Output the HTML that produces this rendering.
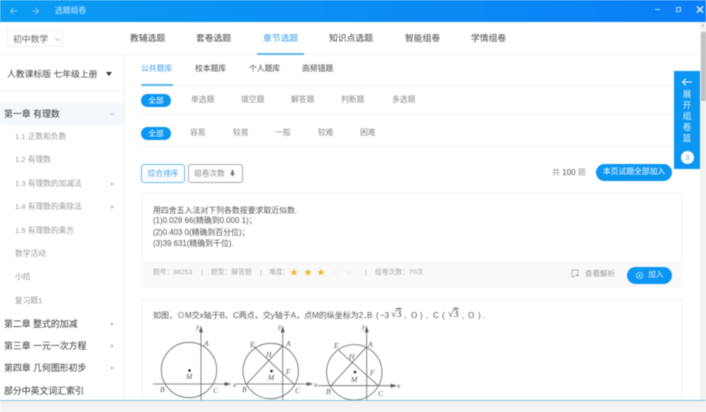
<!DOCTYPE html>
<html lang="zh">
<head>
<meta charset="utf-8">
<style>
html,body{margin:0;padding:0;width:706px;height:412px;overflow:hidden;background:#fff}
#r{position:relative;width:706px;height:412px;overflow:hidden;font-family:"Liberation Sans","Noto Sans CJK SC",sans-serif;filter:blur(.4px)}
#r div{position:absolute}
.t{position:absolute;white-space:nowrap;line-height:12px;height:12px}
.tab{font-size:8.8px;color:#444;top:32px}
.lib{font-size:7.8px;color:#444;top:63px}
.f{font-size:7.8px;color:#888}
.sub{font-size:7.7px;color:#999;left:15px}
.ch{font-size:8.9px;color:#333;left:4px}
.pill{background:#0b96f2;border-radius:7px;color:#fff;font-size:7.6px;text-align:center;line-height:13px;left:141px;width:30px;height:13px}
.ln{background:#f3f3f3;height:1px;left:141px;width:542px}
.q{font-size:7.9px;color:#555;left:153px}
.p{font-size:8px;color:#555;top:310px}
.m{font-size:6.8px;color:#aaa;top:267px}
.star{font-size:8px;top:267px;line-height:12px}
.arr{position:absolute;width:0;height:0;border-top:2px solid transparent;border-bottom:2px solid transparent;border-left:3px solid #bbb}
</style>
</head>
<body>
<div id="r">
<!-- title bar -->
<div style="left:0;top:0;width:706px;height:22px;background:linear-gradient(90deg,#0a9df2,#0a7ef6)"></div>
<svg style="position:absolute;left:0;top:0" width="60" height="22" fill="none" stroke="#7cc6f5" stroke-width="1.1"><path d="M10.5 11H17M13.5 8L10.5 11L13.5 14"/><path d="M32 11H38.5M35.5 8L38.5 11L35.5 14"/></svg>
<span class="t" style="left:55px;top:5px;font-size:7.8px;color:#cfeafd">选题组卷</span>
<div style="left:655px;top:8.5px;width:5px;height:1.5px;background:#a9d6fb"></div>
<div style="left:676px;top:7px;width:3px;height:3px;border:1px solid #a9d6fb"></div>
<svg style="position:absolute;left:696px;top:5px" width="9" height="9" stroke="#d7ecfd" stroke-width="1.5"><path d="M1 1.5L7 7.5M7 1.5L1 7.5"/></svg>

<!-- top nav -->
<div style="left:0;top:54px;width:700px;height:1px;background:#f2f2f2"></div>
<div style="left:7px;top:30px;width:56px;height:17px;border:1px solid #efefef;box-sizing:border-box"></div>
<span class="t" style="left:13px;top:33px;font-size:8.8px;color:#666">初中数学</span>
<svg style="position:absolute;left:54px;top:37px" width="7" height="5" fill="none" stroke="#aaa" stroke-width=".7"><path d="M1 1L3.5 3.5L6 1"/></svg>
<span class="t tab" style="left:130px">教辅选题</span>
<span class="t tab" style="left:196px">套卷选题</span>
<span class="t tab" style="left:263px;color:#3c9ce6">章节选题</span>
<span class="t tab" style="left:329px">知识点选题</span>
<span class="t tab" style="left:405px">智能组卷</span>
<span class="t tab" style="left:471px">学情组卷</span>
<div style="left:257px;top:53px;width:47px;height:2px;background:#62b6e6"></div>

<!-- sidebar -->
<div style="left:124px;top:55px;width:1px;height:345px;background:#efefef"></div>
<span class="t" style="left:7px;top:68px;font-size:8.8px;color:#444">人教课标版 七年级上册</span>
<div style="left:106px;top:72px;width:0;height:0;border-left:3px solid transparent;border-right:3px solid transparent;border-top:4px solid #333"></div>
<div style="left:0;top:91px;width:124px;height:1px;background:#efefef"></div>
<div style="left:0;top:103px;width:124px;height:22px;background:#f3f8fd"></div>
<span class="t ch" style="top:108px">第一章 有理数</span>
<svg style="position:absolute;left:109px;top:112px" width="6" height="4" fill="none" stroke="#bbb" stroke-width=".8"><path d="M1 1L3 3L5 1"/></svg>
<span class="t sub" style="top:131px">1.1 正数和负数</span>
<span class="t sub" style="top:154px">1.2 有理数</span>
<span class="t sub" style="top:178px">1.3 有理数的加减法</span>
<span class="arr" style="left:111px;top:182px"></span>
<span class="t sub" style="top:201px">1.4 有理数的乘除法</span>
<span class="arr" style="left:111px;top:205px"></span>
<span class="t sub" style="top:225px">1.5 有理数的乘方</span>
<span class="t sub" style="top:248px">数学活动</span>
<span class="t sub" style="top:271px">小结</span>
<span class="t sub" style="top:295px">复习题1</span>
<span class="t ch" style="top:318px">第二章 整式的加减</span>
<span class="arr" style="left:111px;top:322px"></span>
<span class="t ch" style="top:340px">第三章 一元一次方程</span>
<span class="arr" style="left:111px;top:344px"></span>
<span class="t ch" style="top:362px">第四章 几何图形初步</span>
<span class="arr" style="left:111px;top:366px"></span>
<span class="t ch" style="top:385px">部分中英文词汇索引</span>

<!-- library tabs -->
<span class="t lib" style="left:141px;color:#3c9ce6">公共题库</span>
<span class="t lib" style="left:195px">校本题库</span>
<span class="t lib" style="left:249px">个人题库</span>
<span class="t lib" style="left:302px">高频错题</span>
<div class="ln" style="top:85px"></div>
<div style="left:141px;top:84px;width:32px;height:1.5px;background:#5cb3ee"></div>

<!-- filters -->
<div class="pill" style="top:94px">全部</div>
<span class="t f" style="left:191px;top:94px">单选题</span>
<span class="t f" style="left:241px;top:94px">填空题</span>
<span class="t f" style="left:291px;top:94px">解答题</span>
<span class="t f" style="left:341px;top:94px">判断题</span>
<span class="t f" style="left:392px;top:94px">多选题</span>
<div class="ln" style="top:114px"></div>
<div class="pill" style="top:127px">全部</div>
<span class="t f" style="left:190px;top:127px">容易</span>
<span class="t f" style="left:233px;top:127px">较易</span>
<span class="t f" style="left:275px;top:127px">一般</span>
<span class="t f" style="left:318px;top:127px">较难</span>
<span class="t f" style="left:360px;top:127px">困难</span>
<div class="ln" style="top:146px"></div>

<!-- sort -->
<div style="left:141px;top:164px;width:44px;height:19px;border:1px solid #6bb8ec;border-radius:3px;box-sizing:border-box;color:#3c9ce6;font-size:7.7px;text-align:center;line-height:17px">综合排序</div>
<div style="left:188px;top:164px;width:55px;height:19px;border:1px solid #aaa;border-radius:3px;box-sizing:border-box"></div>
<span class="t" style="left:194px;top:168px;font-size:7.7px;color:#888">组卷次数</span>
<svg style="position:absolute;left:229px;top:169px" width="7" height="9" fill="#777"><path d="M2.5 1H4.500V4H6L3.500 7.500L1 4H2.500Z"/></svg>
<span class="t" style="left:552px;top:167px;font-size:8px;color:#999">共 <span style="color:#555">100</span> 题</span>
<div style="left:596px;top:164px;width:76px;height:16.5px;border-radius:9px;background:#0b96f2;color:#fff;font-size:7.8px;text-align:center;line-height:16.5px">本页试题全部加入</div>

<!-- card 1 -->
<div style="left:141px;top:193px;width:542px;height:95px;border:1px solid #f4f4f4;box-sizing:border-box"></div>
<div style="left:141px;top:261px;width:542px;height:27px;background:#f9f9f9"></div>
<span class="t q" style="top:205px">用四舍五入法对下列各数按要求取近似数.</span>
<span class="t q" style="top:215px">(1)0.028 66(精确到0.000 1)；</span>
<span class="t q" style="top:227px">(2)0.403 0(精确到百分位)；</span>
<span class="t q" style="top:238px">(3)39 631(精确到千位).</span>
<span class="t m" style="left:153px">题号：88253</span>
<span class="t m" style="left:201px">|</span>
<span class="t m" style="left:211px">题型：解答题</span>
<span class="t m" style="left:260px">|</span>
<span class="t m" style="left:269px">难度：</span>
<span class="t star" style="left:290px;color:#f2b01e">★</span>
<span class="t star" style="left:304px;color:#f2b01e">★</span>
<span class="t star" style="left:317px;color:#f2b01e">★</span>
<span class="t star" style="left:331px;color:#f3f3f3">★</span>
<span class="t star" style="left:345px;color:#f3f3f3">★</span>
<span class="t m" style="left:365px">|</span>
<span class="t m" style="left:375px">组卷次数：70次</span>
<svg style="position:absolute;left:571px;top:269px" width="9" height="9" fill="none" stroke="#999" stroke-width=".7"><path d="M1 1H7V4M1 1V7.5H4M5 5L7.5 7.5M4.5 6A1.3 1.3 0 1 0 7 4.8"/></svg>
<span class="t" style="left:585px;top:268px;font-size:7.5px;color:#999">查看解析</span>
<div style="left:627px;top:267px;width:45px;height:17px;border-radius:9px;background:#0b96f2"></div>
<svg style="position:absolute;left:635px;top:271px" width="9" height="9" fill="none" stroke="#d5eefd" stroke-width=".7"><circle cx="4.5" cy="4.5" r="3.2"/><path d="M3 4.5H6M4.5 3V6"/></svg>
<span class="t" style="left:648px;top:269px;font-size:7.8px;color:#e6f5fe">加入</span>

<!-- card 2 -->
<div style="left:141px;top:299px;width:542px;height:113px;border:1px solid #f4f4f4;box-sizing:border-box"></div>
<span class="t p" style="left:153px">如图，⊙M交x轴于B、C两点，交y轴于A，点M的纵坐标为2．</span>
<span class="t p" style="left:367px">B</span>
<span class="t p" style="left:376px">(</span>
<span class="t p" style="left:380px">−3</span>
<span class="t" style="left:391px;top:309px;font-size:10px;color:#444;font-family:'Liberation Serif',serif">√<span style="text-decoration:overline">3</span></span>
<span class="t p" style="left:404px">,</span>
<span class="t p" style="left:411px">O</span>
<span class="t p" style="left:420px">)</span>
<span class="t p" style="left:426px">,</span>
<span class="t p" style="left:433px">C</span>
<span class="t p" style="left:442px">(</span>
<span class="t" style="left:448px;top:309px;font-size:10px;color:#444;font-family:'Liberation Serif',serif">√<span style="text-decoration:overline">3</span></span>
<span class="t p" style="left:462px">,</span>
<span class="t p" style="left:468px">O</span>
<span class="t p" style="left:478px">)</span>
<span class="t p" style="left:483px">.</span>
<svg style="position:absolute;left:130px;top:320px" width="290" height="92" fill="none" stroke="#666" stroke-width=".8" font-family="Liberation Serif,serif" font-style="italic" font-size="7.5">
 <!-- fig 1 -->
 <circle cx="59" cy="50" r="27.7"/>
 <path d="M71 9V92M23 64H99"/>
 <path d="M71 7L69.500 12H72.500ZM100 64L95 62.500V65.500Z" fill="#555"/>
 <circle cx="59.5" cy="50.500" r="1.3" fill="#222" stroke="none"/>
 <g fill="#555" stroke="none">
  <text x="66" y="9">y</text><text x="103" y="67">x</text><text x="74" y="26">A</text><text x="30" y="72">B</text><text x="83" y="73">C</text><text x="56" y="59">M</text>
 </g>
 <!-- fig 2 -->
 <circle cx="140.7" cy="51" r="27.7"/>
 <path d="M152.7 9V92M105.700 64H181M116.700 64L152.700 25.700M124 26.700L165 65"/>
 <path d="M152.7 7L151.2 12H154.2ZM182 64L177 62.500V65.500Z" fill="#555"/>
 <circle cx="141.5" cy="51" r="1.3" fill="#222" stroke="none"/>
 <g fill="#555" stroke="none">
  <text x="148" y="9">y</text><text x="184" y="67">x</text><text x="156" y="26">A</text><text x="112" y="72">B</text><text x="165" y="73">C</text><text x="138" y="60">M</text><text x="120" y="27">E</text><text x="136" y="37">H</text><text x="156" y="54">F</text>
 </g>
 <!-- fig 3 -->
 <circle cx="224.3" cy="52.3" r="27.7"/>
 <path d="M236.7 9V92M188 65.700H265M201 65.700L236.700 26.700M208.300 30L248.300 65.700"/>
 <path d="M236.7 7L235.2 12H238.2ZM266 65.700L261 64.200V67.200Z" fill="#555"/>
 <circle cx="225" cy="52" r="1.3" fill="#222" stroke="none"/>
 <g fill="#555" stroke="none">
  <text x="232" y="9">y</text><text x="267" y="68">x</text><text x="238" y="27">A</text><text x="196" y="74">B</text><text x="248" y="76">C</text><text x="221" y="62">M</text><text x="204" y="28">E</text><text x="219" y="39">H</text><text x="240" y="55">F</text>
 </g>
</svg>

<!-- cart -->
<div style="left:674px;top:71px;width:26px;height:98px;background:#0b96f2"></div>
<svg style="position:absolute;left:681px;top:77px" width="12" height="10" fill="none" stroke="#fff" stroke-width=".9"><path d="M1.5 5H11M5 1.5L1.5 5L5 8.5"/></svg>
<div style="left:674px;top:88.500px;width:26px;color:#e6f5fe;font-size:8.500px;line-height:11.200px;text-align:center">展<br>开<br>组<br>卷<br>篮</div>
<div style="left:681px;top:151px;width:13px;height:13px;border-radius:50%;background:#fff;color:#5ab2ee;font-size:7.5px;line-height:13px;text-align:center">3</div>

<!-- scrollbar -->
<div style="left:700px;top:22px;width:6px;height:378px;background:#f1f1f1"></div>
<div style="left:702px;top:24px;width:0;height:0;border-left:1.500px solid transparent;border-right:1.500px solid transparent;border-bottom:2px solid #999"></div>
<div style="left:701px;top:32px;width:5px;height:69px;background:#c1c1c1"></div>

<!-- bottom -->
<div style="left:0;top:400px;width:706px;height:12px;background:#f3f3f3"></div>
<div style="left:0;top:400px;width:706px;height:1px;background:#8cc0dc"></div>
</div>
</body>
</html>
